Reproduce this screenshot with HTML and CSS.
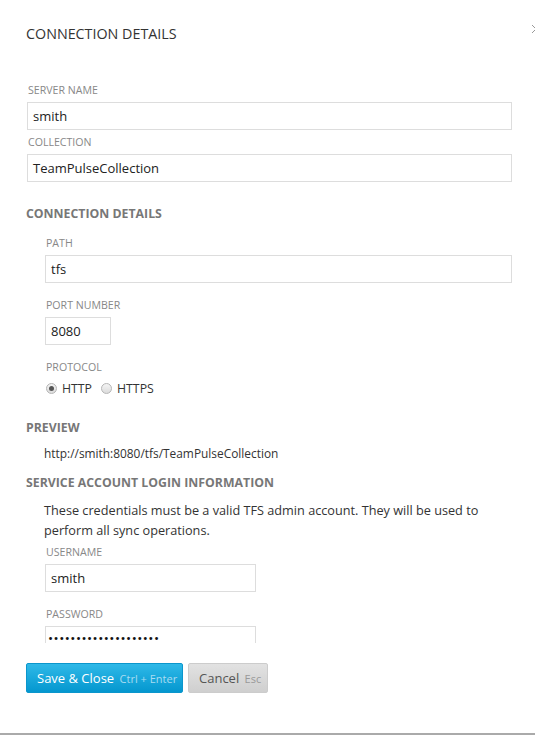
FILE: index.html
```html
<!DOCTYPE html>
<html>
<head>
<meta charset="utf-8">
<link rel="stylesheet" href="styles.css">
</head>
<body>
<div class="dialog">
  <div class="header">
    <h1 class="title">CONNECTION DETAILS</h1>
    <svg class="close" width="10" height="10" viewBox="0 0 10 10"><path d="M1 1 L9 9 M9 1 L1 9" stroke="#999" stroke-width="1" fill="none"/></svg>
  </div>
  <div class="form">
    <div class="group top">
      <div class="field first">
        <label class="lbl">SERVER NAME</label>
        <div class="input wide">smith</div>
      </div>
      <div class="field tight">
        <label class="lbl">COLLECTION</label>
        <div class="input wide">TeamPulseCollection</div>
      </div>
    </div>

    <h2 class="heading h-conn">CONNECTION DETAILS</h2>
    <div class="group indent">
      <div class="field first">
        <label class="lbl">PATH</label>
        <div class="input wide">tfs</div>
      </div>
      <div class="field">
        <label class="lbl">PORT NUMBER</label>
        <div class="input port">8080</div>
      </div>
      <div class="field">
        <label class="lbl">PROTOCOL</label>
        <div class="radios">
          <span class="radio checked"></span><span class="rtext">HTTP</span>
          <span class="radio"></span><span class="rtext">HTTPS</span>
        </div>
      </div>
    </div>

    <h2 class="heading h-preview">PREVIEW</h2>
    <div class="url">http://smith:8080/tfs/TeamPulseCollection</div>

    <h2 class="heading h-service">SERVICE ACCOUNT LOGIN INFORMATION</h2>
    <p class="desc">These credentials must be a valid TFS admin account. They will be used to perform all sync operations.</p>
    <div class="group indent">
      <div class="field tight">
        <label class="lbl">USERNAME</label>
        <div class="input user">smith</div>
      </div>
      <div class="field">
        <label class="lbl">PASSWORD</label>
        <div class="input user pass">••••••••••••••••••••</div>
      </div>
    </div>
  </div>
  <div class="buttons">
    <button class="btn primary">Save &amp; Close <span class="key">Ctrl + Enter</span></button>
    <button class="btn secondary">Cancel <span class="key">Esc</span></button>
  </div>
</div>
</body>
</html>
```
FILE: styles.css
```css
html, body {
  margin: 0;
  padding: 0;
  background: #fff;
  overflow: hidden;
}
body {
  font-family: "Open Sans", "Liberation Sans", sans-serif;
  color: #333;
  width: 535px;
  height: 735px;
}
.dialog {
  position: relative;
  height: 733px;
  border-bottom: 2px solid #aaa;
}
.header {
  height: 60px;
  padding: 0 0 0 26px;
  box-sizing: border-box;
}
.title {
  margin: 0;
  padding-top: 25px;
  font-size: 14.3px;
  line-height: 18px;
  font-weight: normal;
  color: #333;
}
.close {
  position: absolute;
  left: 531px;
  top: 24px;
}
.form {
  height: 583px;
  overflow: hidden;
  padding: 0 23px 0 26px;
}
.group.top {
  padding-left: 1px;
  padding-top: 23px;
}
.group.indent {
  padding-left: 19px;
}
.field {
  margin-top: 15px;
}
.field.first {
  margin-top: 14px;
}
.group.top .field.first {
  margin-top: 0;
}
.field.tight {
  margin-top: 5px;
}
.lbl {
  display: block;
  font-size: 10.6px;
  line-height: 14px;
  color: #888;
  padding-left: 1px;
  margin-bottom: 5px;
}
.input {
  box-sizing: border-box;
  height: 28px;
  border: 1px solid #ddd;
  padding-left: 5px;
  font-size: 13px;
  line-height: 26px;
  color: #222;
  white-space: nowrap;
  overflow: hidden;
}
.input.port {
  width: 66px;
}
.input.user {
  width: 211px;
}
.input.pass {
  letter-spacing: 0.5px;
  font-size: 13.5px;
  line-height: 22px;
  padding-left: 2px;
  color: #111;
}
.radios {
  display: flex;
  align-items: center;
  height: 18px;
  margin-top: 4px;
  font-size: 12.3px;
  color: #333;
}
.radio {
  box-sizing: border-box;
  width: 11px;
  height: 11px;
  border-radius: 50%;
  border: 1px solid #b5b5b5;
  background: linear-gradient(#f4f4f4, #dcdcdc);
  margin-left: 1px;
  margin-right: 5px;
  position: relative;
}
.radio.checked::after {
  content: "";
  position: absolute;
  left: 2px;
  top: 2px;
  width: 5px;
  height: 5px;
  border-radius: 50%;
  background: #555;
}
.rtext {
  margin-right: 8px;
}
.heading {
  margin: 0;
  font-size: 12.3px;
  line-height: 16px;
  font-weight: bold;
  color: #777;
}
.h-conn {
  margin-top: 24px;
}
.h-preview {
  margin-top: 23px;
}
.url {
  margin-top: 8px;
  padding-left: 18px;
  font-size: 11.9px;
  line-height: 18px;
  color: #333;
}
.h-service {
  margin-top: 13px;
}
.desc {
  margin: 9px 0 0;
  padding-left: 18px;
  font-size: 12.7px;
  line-height: 20px;
  color: #333;
}
.buttons {
  display: flex;
  gap: 5px;
  padding: 20px 0 0 26px;
}
.btn {
  box-sizing: border-box;
  height: 30px;
  border-radius: 2px;
  font-family: "Open Sans", "Liberation Sans", sans-serif;
  font-size: 13px;
  padding: 0 0 0 10px;
  text-align: left;
  cursor: pointer;
  white-space: nowrap;
}
.btn .key {
  font-size: 11px;
  margin-left: 2px;
}
.btn.primary {
  width: 157px;
  color: #fff;
  border: 1px solid #0b96cc;
  background: linear-gradient(#2fb9e8, #0497cf);
}
.btn.primary .key {
  color: #a9dcf1;
}
.btn.secondary {
  width: 80px;
  color: #555;
  border: 1px solid #ccc;
  background: linear-gradient(#e2e2e2, #cfcfcf);
}
.btn.secondary .key {
  color: #999;
}
```
